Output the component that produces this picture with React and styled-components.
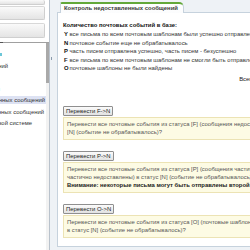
import styled, { createGlobalStyle } from "styled-components";

const GlobalStyle = createGlobalStyle`
  html, body {
    margin: 0;
    padding: 0;
    background: #eef2f6;
  }
  body {
    font-family: "Liberation Sans", Arial, sans-serif;
    font-size: 5.9px;
    color: #333;
  }
`;

const legend = [
  ["Y", "все письма по всем почтовым шаблонам были успешно отправлены"],
  ["N", "почтовое событие еще не обрабатывалось"],
  ["P", "часть писем отправлена успешно, часть писем - безуспешно"],
  ["F", "все письма по всем почтовым шаблонам не смогли быть отправлены"],
  ["O", "почтовые шаблоны не были найдены"],
];

const actions = [
  {
    label: "Перевести F->N",
    lines: [
      "Перевести все почтовые события из статуса [F] (сообщения недоставлены) в статус",
      "[N] (событие не обрабатывалось)?",
    ],
  },
  {
    label: "Перевести P->N",
    lines: [
      "Перевести все почтовые события из статуса [P] (сообщения частично доставлены,",
      "частично недоставлены) в статус [N] (событие не обрабатывалось)?",
    ],
    warning: "Внимание: некоторые письма могут быть отправлены второй раз!",
  },
  {
    label: "Перевести O->N",
    lines: [
      "Перевести все почтовые события из статуса [O] (почтовые шаблоны не найдены)",
      "в статус [N] (событие не обрабатывалось)?",
    ],
  },
];

// tree is scrolled to the right: "end" is where each label ends in the visible strip
const tree = [
  { text: "Почта", icon: true, end: 2 },
  { text: "Статистика уведомлений", end: 8 },
  { text: "Отчёты", end: -4 },
  { text: "Журнал", end: -4 },
  { text: "Контроль недоставленных сообщений", active: true, end: 45 },
  { text: "Очередь недоставленных сообщений", end: 44 },
  { text: "Регистрация в почтовой системе", end: 32 },
];

const App = () => {
  return (
    <>
      <GlobalStyle />
      <Page>
        <Sidebar>
          <AccordionBar $h={5} $cut />
          <AccordionBar $h={14} />
          <AccordionBar $h={15} />
          <TreeHeader />
          <TreeArea>
            <TreeScroll>
              {tree.map((item) => (
                <TreeRow key={item.text} $active={item.active} $end={item.end}>
                  <span>{item.text}</span>
                  {item.icon && <TreeIcon />}
                </TreeRow>
              ))}
            </TreeScroll>
            <Scrollbar>
              <Thumb />
            </Scrollbar>
          </TreeArea>
        </Sidebar>
        <Splitter>
          <Grip />
        </Splitter>
        <Main>
          <TabStrip>
            <Tab>Контроль недоставленных сообщений</Tab>
          </TabStrip>
          <Panel>
            <Title>Количество почтовых событий в базе:</Title>
            <Legend>
              {legend.map(([code, text]) => (
                <LegendRow key={code}>
                  <Code>{code}</Code>
                  <span>{text}</span>
                </LegendRow>
              ))}
            </Legend>
            <Total>Всего событий: 0</Total>
            <Actions>
              {actions.map((a) => (
                <Action key={a.label}>
                  <Button>{a.label}</Button>
                  <Note>
                    {a.lines.map((l) => (
                      <NoteLine key={l}>{l}</NoteLine>
                    ))}
                    {a.warning && <NoteLine $bold>{a.warning}</NoteLine>}
                  </Note>
                </Action>
              ))}
            </Actions>
          </Panel>
        </Main>
      </Page>
    </>
  );
};

const Page = styled.div`
  display: flex;
  width: 250px;
  height: 250px;
  overflow: hidden;
  background: #eef2f6;
`;

const Sidebar = styled.div`
  width: 49px;
  flex-shrink: 0;
  display: flex;
  flex-direction: column;
  background: #fff;
  border-right: 1px solid #b9c2cc;
`;

const AccordionBar = styled.div`
  flex-shrink: 0;
  height: ${(p) => p.$h}px;
  margin: 0 4px ${(p) => (p.$cut ? 1 : 3)}px 0;
  box-sizing: border-box;
  border: 1px solid #cfcfcf;
  border-left: none;
  border-top: ${(p) => (p.$cut ? "none" : "1px solid #d8d8d8")};
  border-radius: 0 2px 2px 0;
  background: linear-gradient(#fafafa, #e4e4e4);
`;

const TreeHeader = styled.div`
  flex-shrink: 0;
  height: 1px;
  margin-top: 1px;
  background: #a0a0a0;
  border-left: 3px solid #555;
`;

const TreeArea = styled.div`
  flex: 1;
  display: flex;
  min-height: 0;
`;

const TreeScroll = styled.div`
  width: 46px;
  overflow: hidden;
  padding-top: 7px;
  display: flex;
  flex-direction: column;
  gap: 3.5px;
`;

const TreeRow = styled.div`
  height: 8px;
  line-height: 8px;
  white-space: nowrap;
  color: #333;
  background: ${(p) => (p.$active ? "#dde2f3" : "transparent")};
  display: flex;
  align-items: center;
  justify-content: flex-end;
  padding-right: ${(p) => 46 - p.$end}px;
  span {
    flex-shrink: 0;
  }
`;

const TreeIcon = styled.i`
  flex-shrink: 0;
  width: 3px;
  height: 3px;
  margin-left: 30px;
  background: #6cc7d8;
`;

const Scrollbar = styled.div`
  width: 3px;
  background: #f2f2f2;
`;

const Thumb = styled.div`
  height: 40px;
  background: #a9a9a9;
`;

const Splitter = styled.div`
  width: 3px;
  flex-shrink: 0;
  display: flex;
  align-items: flex-start;
  padding-top: 57px;
  justify-content: center;
`;

const Grip = styled.div`
  width: 1px;
  height: 3px;
  background: #8a9aab;
`;

const Main = styled.div`
  flex-shrink: 0;
  width: 300px;
  padding: 2px 0 3px 4px;
  display: flex;
  flex-direction: column;
`;

const TabStrip = styled.div`
  display: flex;
  padding-left: 3px;
  height: 10px;
  flex-shrink: 0;
`;

const Tab = styled.div`
  height: 11px;
  box-sizing: border-box;
  padding: 0 5px 0 3px;
  border-top: 2px solid #63a83a;
  border-left: 1px solid #c6d2dd;
  border-right: 1px solid #c6d2dd;
  border-radius: 2px 5px 0 0;
  background: linear-gradient(#ffffff, #fbfcfd);
  font-weight: bold;
  color: #3a3a3a;
  line-height: 8px;
  white-space: nowrap;
  position: relative;
  z-index: 1;
`;

const Panel = styled.div`
  flex: 1;
  background: #fff;
  border: 1px solid #c6d2dd;
  padding: 8px 0 0 5px;
`;

const Title = styled.div`
  font-weight: bold;
  color: #111;
  line-height: 8.5px;
  white-space: nowrap;
`;

const Legend = styled.div`
  margin-top: 0.5px;
`;

const LegendRow = styled.div`
  display: flex;
  line-height: 8.5px;
  white-space: nowrap;
  color: #333;
`;

const Code = styled.span`
  width: 5.5px;
  padding-left: 1px;
  flex-shrink: 0;
  font-weight: bold;
  color: #111;
`;

const Total = styled.div`
  text-align: right;
  padding-right: 70px;
  line-height: 8.5px;
  margin-top: 2px;
  color: #222;
`;

const Actions = styled.div`
  padding-top: 23px;
`;

const Action = styled.div`
  & + & {
    margin-top: 11px;
  }
`;

const Button = styled.button`
  display: block;
  height: 10px;
  padding: 0 2px;
  margin: 0 0 1px;
  box-sizing: border-box;
  border: 1px solid #8f8f8f;
  border-radius: 1px;
  background: linear-gradient(#fbfbfb, #e2e2e2);
  font-family: inherit;
  font-size: 5.9px;
  color: #222;
  line-height: 8px;
`;

const Note = styled.div`
  background: #fdfbe4;
  border: 1px solid #ece3b4;
  padding: 2px 3px 3px;
  color: #555;
`;

const NoteLine = styled.div`
  line-height: 8px;
  white-space: nowrap;
  font-weight: ${(p) => (p.$bold ? "bold" : "normal")};
  color: ${(p) => (p.$bold ? "#222" : "#555")};
`;

export default App;
